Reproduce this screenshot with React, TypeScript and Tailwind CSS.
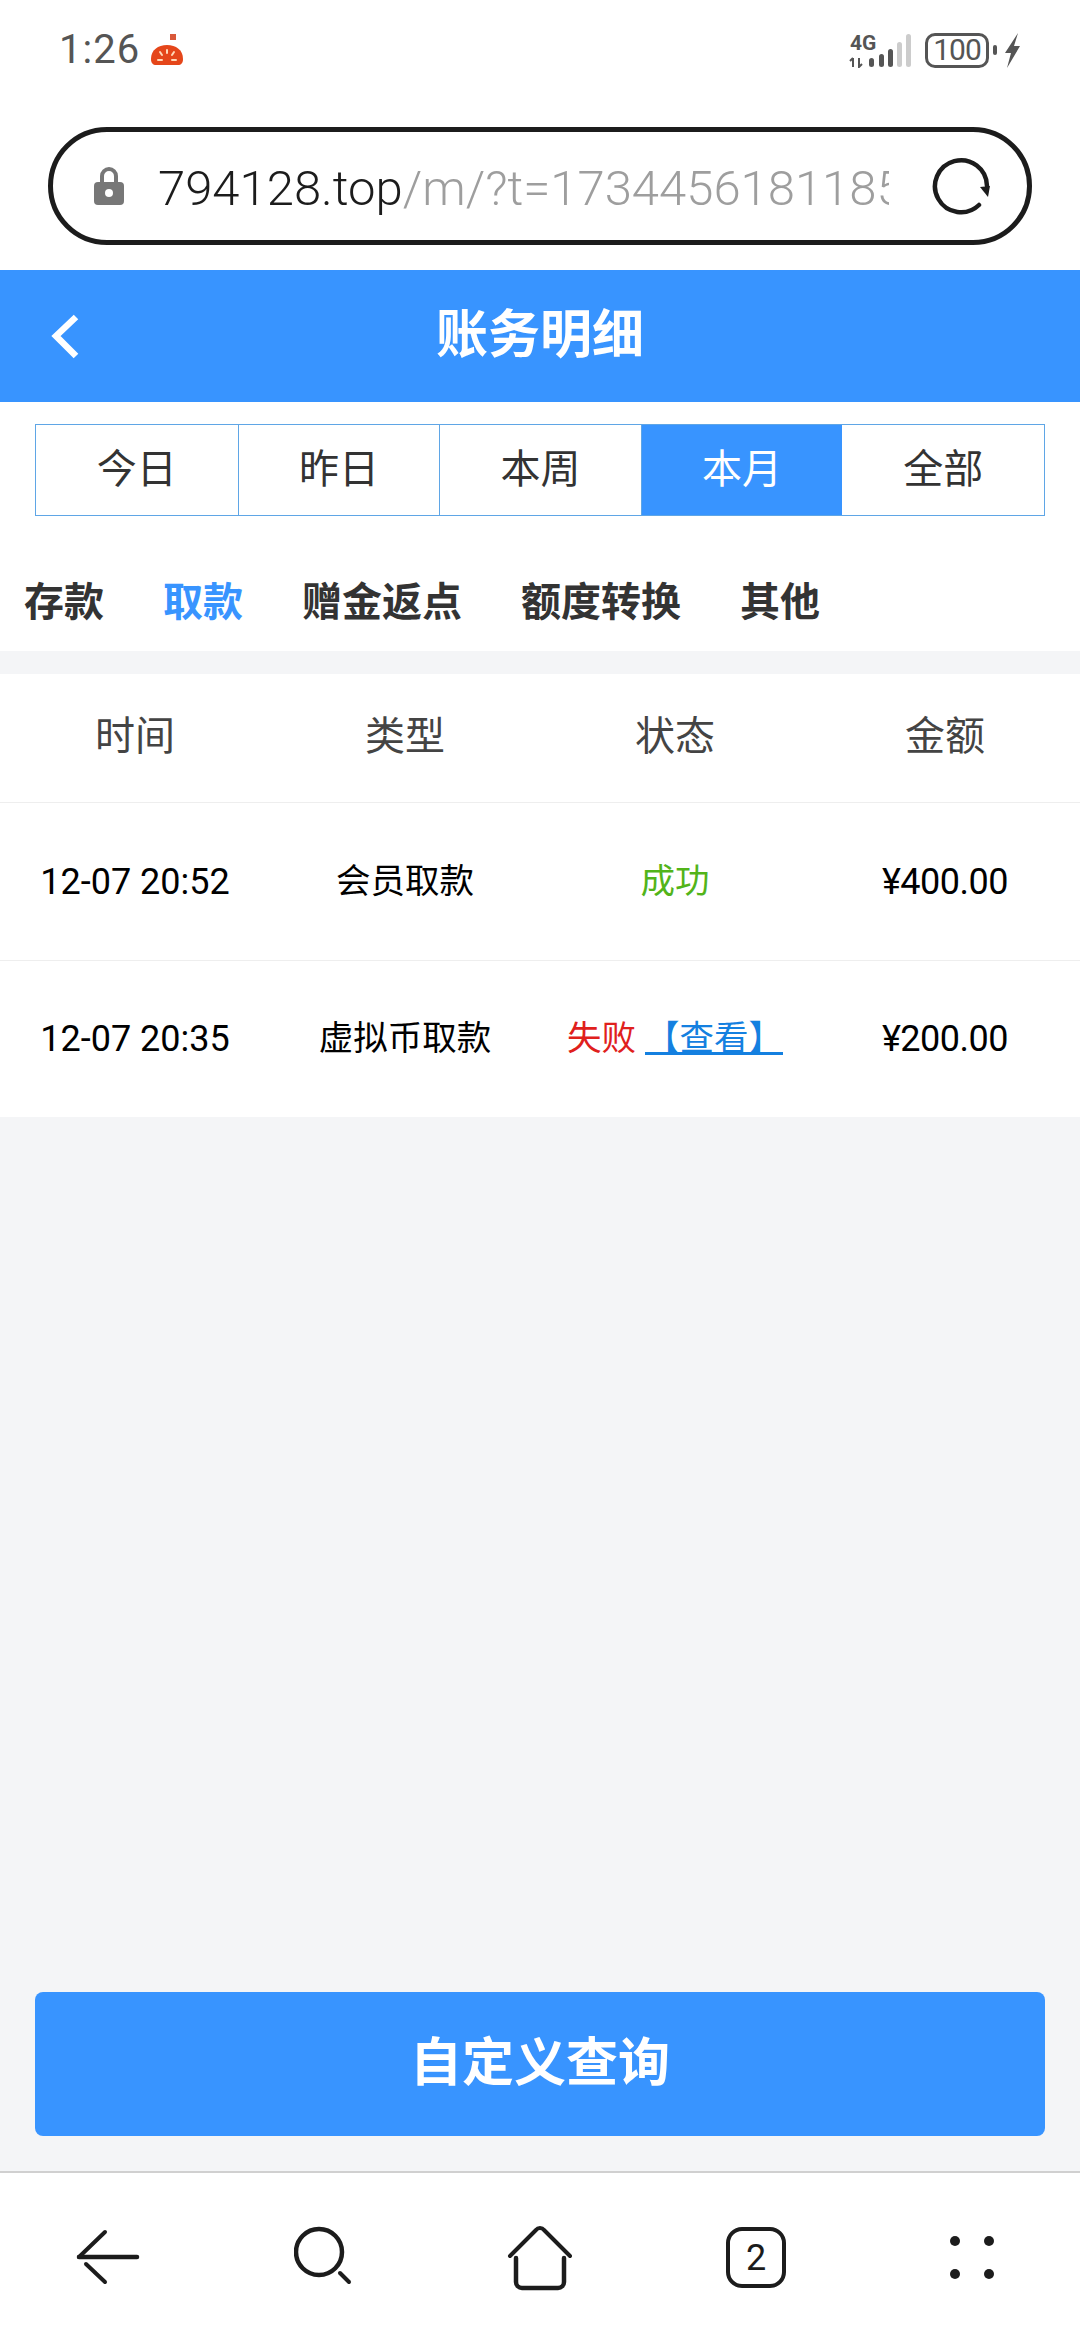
const cjk = "font-['Roboto','Noto_Sans_CJK_SC',sans-serif]";

const ranges = ["今日", "昨日", "本周", "本月", "全部"];
const filters = ["存款", "取款", "赠金返点", "额度转换", "其他"];
const columns = ["时间", "类型", "状态", "金额"];

function StatusBar() {
  return (
    <div className="flex h-[100px] items-center justify-between pl-[59px] pr-[60px]">
      <div className="flex items-center gap-[10px]">
        <span className="text-[40px] leading-none tracking-[1px] text-[#555]">1:26</span>
        <svg width="34" height="32" viewBox="0 0 34 32" className="mb-[1px]">
          <rect x="20" y="0" width="6" height="6" fill="#d9583a" />
          <path d="M1 25C1 16 8 11 17 11s16 5 16 14c0 4-2 6-5 6H6c-3 0-5-2-5-6z" fill="#e5461a" />
          <path d="M17 16v3M10 18l2 3M24 18l-2 3M8 26h4M22 26h4" stroke="#ffd9b8" strokeWidth="2" strokeLinecap="round" />
        </svg>
      </div>
      <div className="flex items-center">
        <svg width="64" height="36" viewBox="0 0 64 36">
          <text x="2" y="18" fontSize="21" fontWeight="700" fill="#555" fontFamily="Roboto">4G</text>
          <path d="M5 26v9M2 29l3-3M11 26v9l3-3" stroke="#555" strokeWidth="2" fill="none" />
          <rect x="21" y="26" width="5" height="9" rx="2.5" fill="#555" />
          <rect x="31" y="22" width="5" height="13" rx="2.5" fill="#555" />
          <rect x="40" y="17" width="5" height="18" rx="2.5" fill="#555" />
          <rect x="49" y="10" width="5" height="25" rx="2.5" fill="#ccc" />
          <rect x="58" y="2" width="5" height="33" rx="2.5" fill="#ccc" />
        </svg>
        <div className="ml-[13px] flex h-[35px] w-[64px] items-center justify-center rounded-[10px] border-[3px] border-[#555] text-[30px] leading-none tracking-[-1px] text-[#555]">
          100
        </div>
        <div className="ml-[4px] h-[10px] w-[4px] rounded-full bg-[#555]" />
        <svg width="15" height="35" viewBox="0 0 15 35" className="ml-[8px]">
          <path d="M13 0 0 20h6L2 35 15 13H9z" fill="#555" />
        </svg>
      </div>
    </div>
  );
}

function UrlBar() {
  return (
    <div className="px-[48px] pt-[27px]">
      <div className="flex h-[118px] items-center rounded-[59px] border-[5px] border-[#1c1c1c] pl-[39px]">
        <svg width="34" height="40" viewBox="0 0 34 40">
          <path d="M10 18V10a7 7 0 0 1 14 0v8" fill="none" stroke="#777" strokeWidth="4" />
          <rect x="2" y="16" width="30" height="23" rx="4" fill="#777" />
          <circle cx="17" cy="27" r="4" fill="#fff" />
        </svg>
        <div className="ml-[32px] w-[731px] overflow-hidden whitespace-nowrap pt-[5px] text-[49px] leading-[60px] font-light text-[#9e9e9e]">
          <span className="text-[#1c1c1c]">794128.top</span>/m/?t=17344561811850
        </div>
        <svg width="60" height="60" viewBox="0 0 60 60" className="ml-[42px]">
          <path d="M56 30A26 26 0 1 0 48 49" fill="none" stroke="#1c1c1c" strokeWidth="4.5" strokeLinecap="round" />
          <path d="M49 31l10-1-2 11z" fill="#1c1c1c" />
        </svg>
      </div>
    </div>
  );
}

function BottomNav() {
  return (
    <div className="grid h-[169px] grid-cols-5 items-center border-t-2 border-[#d0d0d0] bg-white pt-[2px] text-[#1c1c1c]">
      <div className="flex justify-center">
        <svg width="64" height="64" viewBox="0 0 64 64" fill="none" stroke="currentColor" strokeLinecap="round">
          <path d="M3 31 29 6" strokeWidth="4" />
          <path d="M3 31h58" strokeWidth="4.5" />
          <path d="M10 38 29 56" strokeWidth="4" />
        </svg>
      </div>
      <div className="flex justify-center">
        <svg width="60" height="64" viewBox="0 0 60 64" fill="none" stroke="currentColor" strokeLinecap="round">
          <circle cx="25" cy="26" r="23" strokeWidth="4.5" />
          <path d="M46 47 55 56" strokeWidth="4" />
        </svg>
      </div>
      <div className="flex justify-center">
        <svg width="68" height="66" viewBox="0 0 68 66" fill="none" stroke="currentColor" strokeLinecap="round" strokeLinejoin="round">
          <path d="M4 31 30 5a5 5 0 0 1 8 0l26 26" strokeWidth="4" />
          <path d="M10 33v24a6 6 0 0 0 6 6h36a6 6 0 0 0 6-6V33" strokeWidth="4.5" />
        </svg>
      </div>
      <div className="flex justify-center">
        <div className="flex h-[61px] w-[60px] items-center justify-center rounded-[16px] border-[4px] border-[#1c1c1c] text-[36px] leading-none">
          2
        </div>
      </div>
      <div className="flex justify-center">
        <div className="grid grid-cols-2 gap-x-[24px] gap-y-[23px]">
          <div className="h-[10px] w-[10px] rounded-full bg-[#1c1c1c]" />
          <div className="h-[10px] w-[10px] rounded-full bg-[#1c1c1c]" />
          <div className="h-[10px] w-[10px] rounded-full bg-[#1c1c1c]" />
          <div className="h-[10px] w-[10px] rounded-full bg-[#1c1c1c]" />
        </div>
      </div>
    </div>
  );
}

export default function App() {
  return (
    <div className={`flex h-[2340px] w-[1080px] flex-col overflow-hidden bg-[#f4f5f7] ${cjk}`}>
      <div className="h-[270px] shrink-0 bg-white">
        <StatusBar />
        <UrlBar />
      </div>

      <header className="relative flex h-[132px] shrink-0 items-center justify-center bg-[#3894ff] text-[52px] font-bold text-white">
        <svg width="32" height="48" viewBox="0 0 32 48" className="absolute left-[50px] top-[42px]" fill="none" stroke="#fff" strokeWidth="6.5">
          <path d="M26 5 6 24l20 20" />
        </svg>
        账务明细
      </header>

      <div className="bg-white px-[35px] pt-[22px]">
        <div className="grid h-[92px] grid-cols-5 border border-[#5fa6e6] text-[40px] text-[#333]">
          {ranges.map((r, i) => (
            <div
              key={r}
              className={`flex items-center justify-center border-[#5fa6e6] ${i > 0 && i < 4 ? "border-l" : ""} ${
                r === "本月" ? "bg-[#3894ff] text-white" : ""
              }`}
            >
              {r}
            </div>
          ))}
        </div>
      </div>

      <div className="flex h-[135px] items-center gap-[59px] bg-white pt-[39px] pl-[24px] text-[40px] font-bold text-[#333]">
        {filters.map((f) => (
          <span key={f} className={f === "取款" ? "text-[#3894ff]" : ""}>
            {f}
          </span>
        ))}
      </div>

      <div className="mt-[23px] bg-white">
        <div className="grid h-[129px] grid-cols-4 items-center border-b border-[#eee] pb-[3px] text-center text-[40px] text-[#444]">
          {columns.map((c) => (
            <div key={c}>{c}</div>
          ))}
        </div>
        <div className="grid h-[158px] grid-cols-4 items-center border-b border-[#eee] text-center text-[34.5px] text-black">
          <div className="text-[36px]">12-07 20:52</div>
          <div>会员取款</div>
          <div className="text-[#52b41a]">成功</div>
          <div className="text-[36px] tracking-[-0.5px]">¥400.00</div>
        </div>
        <div className="grid h-[156px] grid-cols-4 items-center text-center text-[34.5px] text-black">
          <div className="text-[36px]">12-07 20:35</div>
          <div>虚拟币取款</div>
          <div className="whitespace-nowrap">
            <span className="text-[#e0201c]">失败</span>
            <span className="ml-[9px] text-[#1480e0] underline">【查看】</span>
          </div>
          <div className="text-[36px] tracking-[-0.5px]">¥200.00</div>
        </div>
      </div>

      <div className="flex flex-1 flex-col justify-end px-[35px] pb-[35px]">
        <button className="h-[144px] rounded-[8px] bg-[#3894ff] text-[52px] font-bold text-white">
          自定义查询
        </button>
      </div>

      <BottomNav />
    </div>
  );
}
